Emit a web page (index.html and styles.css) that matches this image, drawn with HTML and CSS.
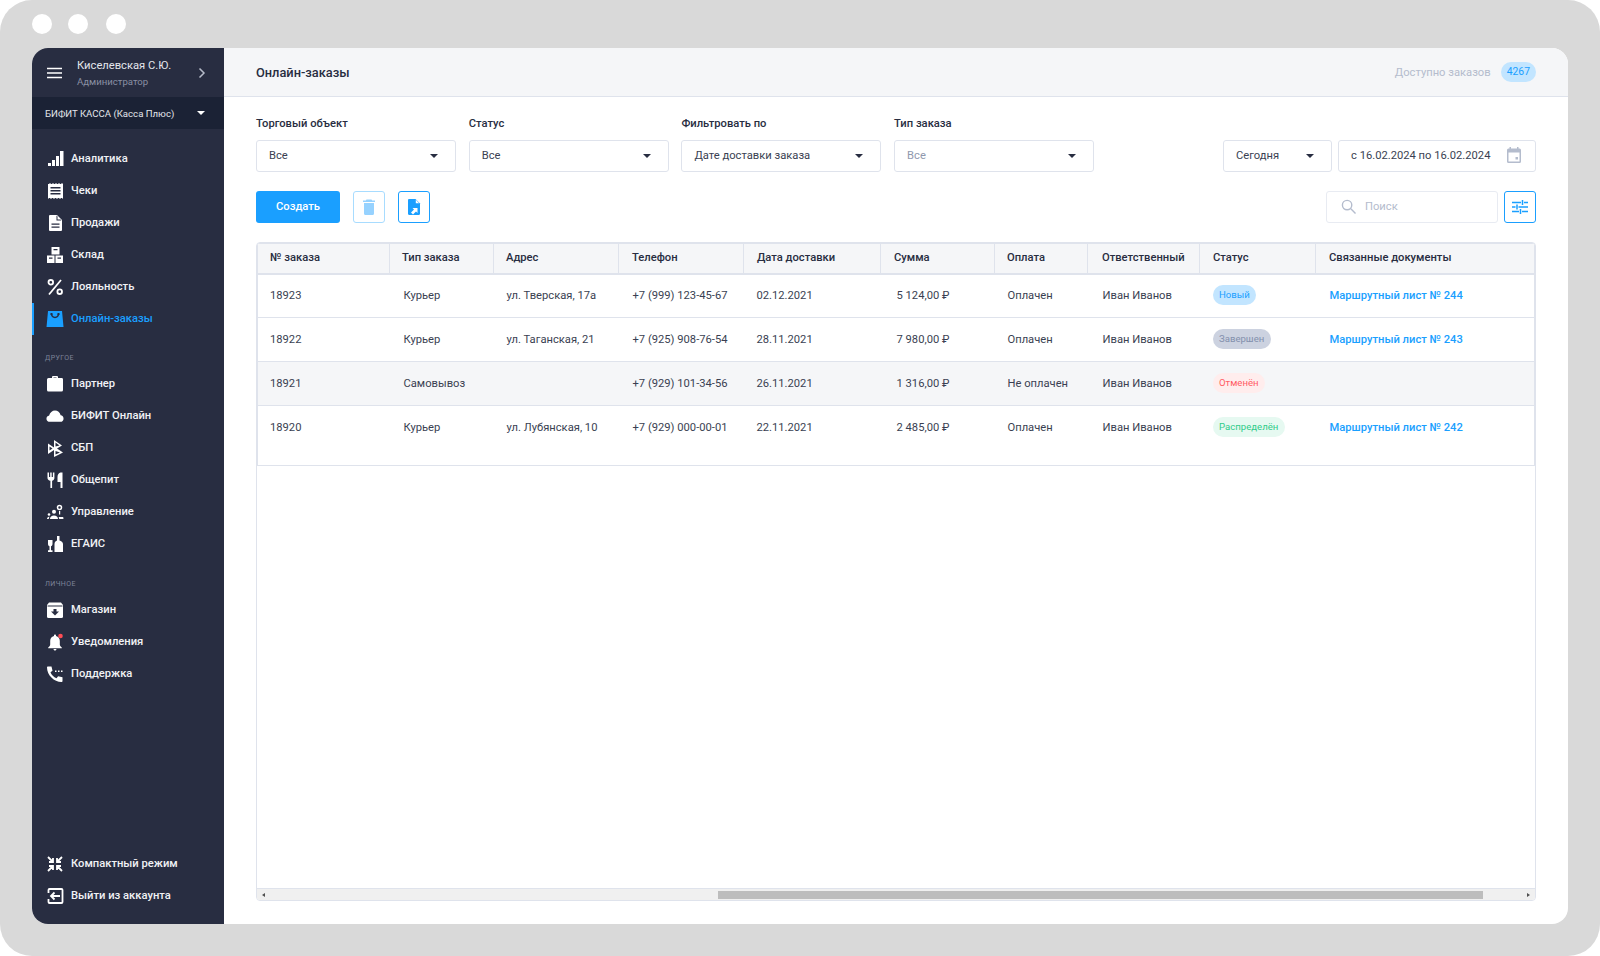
FILE: index.html
```html
<!DOCTYPE html>
<html lang="ru">
  <head>
    <meta charset="UTF-8" />
    <title>Онлайн-заказы</title>
    <link rel="stylesheet" href="styles.css">
  </head>
  <body>
    <div class="frame">
      <div class="dots"><span></span><span></span><span></span></div>

      <div class="app">
        <aside class="sidebar">
          <div class="user">
            <svg class="burger" viewBox="0 0 16 12"><path d="M0 1.5h15M0 6h15M0 10.500h15" /></svg>
            <div class="user-text">
              <div class="user-name">Киселевская С.Ю.</div>
              <div class="user-role">Администратор</div>
            </div>
            <svg class="chevron" viewBox="0 0 8 12"><path d="M1.500 1.500 6 6l-4.500 4.500" /></svg>
          </div>
          <div class="kassa">
            <span>БИФИТ КАССА (Касса Плюс)</span>
            <i class="caret caret-white"></i>
          </div>

          <nav class="nav">
            <a class="nav-item">
              <svg viewBox="0 0 18 18"><path d="M2 13h3v3H2zM6 10h3v6H6zM10 6h3v10h-3zM14 1h3.500v15H14z" /></svg>
              Аналитика
            </a>
            <a class="nav-item">
              <svg viewBox="0 0 18 18"><path d="M2 1.500h15v15H2z" /><path class="cut" d="M4.500 5h10v1.400h-10zM4.500 8h10v1.400h-10zM4.500 11h10v1.400h-10z" /><path class="cut" d="M2 1h1v1H2zM5 1h1v1H5zM8 1h1v1H8zM11 1h1v1h-1zM14 1h1v1h-1zM3 16h1v1H3zM6 16h1v1H6zM9 16h1v1H9zM12 16h1v1h-1zM15 16h1v1h-1z" /></svg>
              Чеки
            </a>
            <a class="nav-item">
              <svg viewBox="0 0 18 18"><path d="M4 1h7l5 5v10a1 1 0 0 1-1 1H4a1 1 0 0 1-1-1V2a1 1 0 0 1 1-1z" /><path class="cut" d="M10.500 1.500v5h5l-1-1h-3v-3zM5.500 9.500h8v1.300h-8zM5.500 12.500h8v1.300h-8z" /></svg>
              Продажи
            </a>
            <a class="nav-item">
              <svg viewBox="0 0 18 18"><path d="M5.500 1h8v7.500h-8zM1 9.500h7.500V17H1zM9.500 9.500H17V17H9.500z" /><path class="cut" d="M7.500 3h4v1.300h-4zM3 11.500h3.500v1.300H3zM11.500 11.500H15v1.300h-3.500z" /></svg>
              Склад
            </a>
            <a class="nav-item">
              <svg class="line bold" viewBox="0 0 18 18"><circle cx="4.800" cy="4.300" r="2.300" /><circle cx="13.700" cy="13.700" r="2.300" /><path d="M15 2 3 16.500" /></svg>
              Лояльность
            </a>
            <a class="nav-item active">
              <svg viewBox="0 0 18 18"><path d="M2 1h14l1.500 16H.5z" /><path class="smile" d="M5.500 4c.5 4.500 6.500 4.500 7 0" /><path class="smile-tip" d="M4.500 3h2v2h-2zM11.500 3h2v2h-2z" /></svg>
              Онлайн-заказы
            </a>

            <div class="nav-label">Другое</div>
            <a class="nav-item">
              <svg viewBox="0 0 18 18"><path d="M6 3V2a1 1 0 0 1 1-1h4a1 1 0 0 1 1 1v1h4a1.500 1.500 0 0 1 1 1.500V15a1.500 1.500 0 0 1-1.500 1.500h-13A1.500 1.500 0 0 1 1 15V4.500A1.500 1.500 0 0 1 2.500 3zm1.500-.500V3h3v-.500z" /></svg>
              Партнер
            </a>
            <a class="nav-item">
              <svg viewBox="0 0 20 18"><path d="M4.500 15.500C2 15.500.5 14 .5 12c0-1.800 1.300-3.200 3-3.500C4.300 5.300 7 3 10 3c3 0 5.500 2.200 6.300 5.300 1.900.2 3.200 1.800 3.200 3.700 0 2-1.500 3.500-3.500 3.500z" /></svg>
              БИФИТ Онлайн
            </a>
            <a class="nav-item">
              <svg viewBox="0 0 18 18"><path d="M2 4.500 8 8.500V1l8 5.500L11 9.500l6 4-9 4.500v-7l-6 4zM3.500 7.500v4L6.500 9.500zM9.500 3.500v4l4-1zM9.500 12v3.500l4.500-2z" fill-rule="evenodd" /></svg>
              СБП
            </a>
            <a class="nav-item">
              <svg viewBox="0 0 18 18"><path d="M1.500 1.500H3V6h1.200V1.500h1.500V6h1.200V1.500h1.500V7c0 1.500-1 2.500-2.300 2.800V17H4.400V9.800C2.600 9.500 1.500 8.500 1.500 7zM14.500 1.500h2V17h-2v-6h-3V6c0-2.500 1.300-4 3-4.500z" /></svg>
              Общепит
            </a>
            <a class="nav-item">
              <svg viewBox="0 0 18 18"><circle cx="8" cy="8.800" r="2" /><circle cx="3" cy="11.500" r="1.300" /><path d="M4 16c0-2.200 1.700-3.500 4-3.500s4 1.300 4 3.500zM1 16c0-1.300.8-2.300 2-2.300l.6.100c-.5.600-.8 1.300-.8 2.200zM13.200 16c0-.8-.2-1.400-.6-2h4.600l.3 2z" /><circle class="gear" cx="13.500" cy="4.500" r="2" /><path d="M13 8h1.200v3.500H13z" /></svg>
              Управление
            </a>
            <a class="nav-item">
              <svg viewBox="0 0 18 18"><path d="M2 5h4.500v4c0 1.200-.7 2-1.500 2.300v4h1.500V17H2v-1.700h1.500v-4C2.700 11 2 10.200 2 9zM11 1h2.500v4.500c1.600.6 3.500 1.600 3.500 3.500v8H8.500V9c0-1.900 1.200-2.900 2.500-3.500z" /></svg>
              ЕГАИС
            </a>

            <div class="nav-label nav-label-low">Личное</div>
            <a class="nav-item">
              <svg viewBox="0 0 18 18"><path d="M3 1.500h12L17 4v11.500a1.500 1.500 0 0 1-1.500 1.500h-13A1.500 1.500 0 0 1 1 15.500V4z" /><path class="cut" d="M1.500 4.500h15v1h-15zM7.500 8h3v2.500h2.500L9 14.500 5 10.500h2.500z" /></svg>
              Магазин
            </a>
            <a class="nav-item">
              <svg viewBox="0 0 18 18"><path d="M9 1.500c.6 0 1 .4 1 1V3c2.500.6 3.800 2.600 3.800 5v3.500c0 1.200.7 2 2 3v.8H2.200v-.8c1.300-1 2-1.800 2-3V8C4.200 5.600 5.500 3.600 8 3v-.500c0-.6.400-1 1-1zM7.500 16h3c0 .8-.7 1.500-1.500 1.500S7.500 16.800 7.500 16z" /><circle class="dot" cx="14.500" cy="3" r="2.300" /></svg>
              Уведомления
            </a>
            <a class="nav-item">
              <svg viewBox="0 0 18 18"><path d="M2 1.500h3.500l1 4.200-2 1.600c1 2.700 3.200 4.900 6 6l1.600-2 4.400 1v3.700c0 .6-.4 1-1 1C8 17 1 10 1 2.500c0-.6.400-1 1-1z" /><path d="M9 5.500h1.500V7H9zM12 5.500h1.500V7H12zM15 5.500h1.500V7H15z" /></svg>
              Поддержка
            </a>
          </nav>

          <div class="nav nav-bottom">
            <a class="nav-item">
              <svg class="line bold" viewBox="0 0 18 18"><path d="M2 2l5 5M7 3v4H3M16 2l-5 5M11 3v4h4M2 16l5-5M3 11h4v4M16 16l-5-5M15 11h-4v4" /></svg>
              Компактный режим
            </a>
            <a class="nav-item">
              <svg class="line bold" viewBox="0 0 18 18"><path d="M2.500 6V3a1 1 0 0 1 1-1h12a1 1 0 0 1 1 1v12a1 1 0 0 1-1 1h-12a1 1 0 0 1-1-1v-3" /><path d="M14 9H5M8.500 5.500 5 9l3.500 3.500" /></svg>
              Выйти из аккаунта
            </a>
          </div>
        </aside>

        <main class="main">
          <header class="topbar">
            <div class="page-title">Онлайн-заказы</div>
            <div class="available">
              <span>Доступно заказов</span>
              <span class="count">4267</span>
            </div>
          </header>

          <section class="content">
            <div class="filters">
              <div class="field">
                <label>Торговый объект</label>
                <div class="select">Все<i class="caret"></i></div>
              </div>
              <div class="field">
                <label>Статус</label>
                <div class="select">Все<i class="caret"></i></div>
              </div>
              <div class="field">
                <label>Фильтровать по</label>
                <div class="select">Дате доставки заказа<i class="caret"></i></div>
              </div>
              <div class="field">
                <label>Тип заказа</label>
                <div class="select select-muted">Все<i class="caret"></i></div>
              </div>
              <div class="period">
                <div class="select select-today">Сегодня<i class="caret"></i></div>
                <div class="select select-date">
                  с 16.02.2024 по 16.02.2024
                  <svg viewBox="0 0 16 16"><path d="M3.500 0h1.500v1.500h6V0h1.500v1.500h1A1.500 1.500 0 0 1 15 3v11.500a1.500 1.500 0 0 1-1.500 1.500h-11A1.500 1.500 0 0 1 1 14.500V3a1.500 1.500 0 0 1 1.500-1.500h1zM2.500 5.500v9h11v-9zM9.500 10h2.500v2.500H9.500z" fill-rule="evenodd" /></svg>
                </div>
              </div>
            </div>

            <div class="actions">
              <button class="btn-primary">Создать</button>
              <button class="btn-icon btn-disabled">
                <svg viewBox="0 0 18 18"><path d="M6.500 1.500h5l.7 1H15V4H3V2.500h2.800zM4 5h10v10.500A1.500 1.500 0 0 1 12.500 17h-7A1.500 1.500 0 0 1 4 15.500z" /></svg>
              </button>
              <button class="btn-icon">
                <svg viewBox="0 0 18 18"><path d="M4 1h6.500L15 5.500V15.500A1.500 1.500 0 0 1 13.500 17h-9A1.500 1.500 0 0 1 3 15.500V2a1 1 0 0 1 1-1z" /><path class="white" d="M10.800 1.800v3.400h3.400zM6 14.500l3-3-1.500-1.500h5v5L11 13.500l-3 3z" /></svg>
              </button>
              <div class="search">
                <svg viewBox="0 0 16 16"><circle cx="6.500" cy="6.500" r="5" /><path d="m10.500 10.500 5 5" /></svg>
                <span>Поиск</span>
              </div>
              <button class="btn-icon">
                <svg class="sliders" viewBox="0 0 16 14"><path d="M0 2.500h9M12 2.500h4M10.500 0v5M0 7h3.500M6.500 7H16M5 4.500v5M0 11.500h7M10 11.500h6M8.500 9v5" /></svg>
              </button>
            </div>

            <div class="table-box">
              <div class="table-area">
                <table>
                  <colgroup>
                    <col class="c1"><col class="c2"><col class="c3"><col class="c4"><col class="c5">
                    <col class="c6"><col class="c7"><col class="c8"><col class="c9"><col>
                  </colgroup>
                  <thead>
                    <tr>
                      <th>№ заказа</th>
                      <th>Тип заказа</th>
                      <th>Адрес</th>
                      <th>Телефон</th>
                      <th>Дата доставки</th>
                      <th>Сумма</th>
                      <th>Оплата</th>
                      <th>Ответственный</th>
                      <th>Статус</th>
                      <th>Связанные документы</th>
                    </tr>
                  </thead>
                  <tbody>
                    <tr>
                      <td>18923</td>
                      <td>Курьер</td>
                      <td>ул. Тверская, 17а</td>
                      <td>+7 (999) 123-45-67</td>
                      <td>02.12.2021</td>
                      <td>5 124,00 ₽</td>
                      <td>Оплачен</td>
                      <td>Иван Иванов</td>
                      <td><span class="pill pill-new">Новый</span></td>
                      <td class="doc">Маршрутный лист № 244</td>
                    </tr>
                    <tr>
                      <td>18922</td>
                      <td>Курьер</td>
                      <td>ул. Таганская, 21</td>
                      <td>+7 (925) 908-76-54</td>
                      <td>28.11.2021</td>
                      <td>7 980,00 ₽</td>
                      <td>Оплачен</td>
                      <td>Иван Иванов</td>
                      <td><span class="pill pill-done">Завершен</span></td>
                      <td class="doc">Маршрутный лист № 243</td>
                    </tr>
                    <tr class="row-grey">
                      <td>18921</td>
                      <td>Самовывоз</td>
                      <td></td>
                      <td>+7 (929) 101-34-56</td>
                      <td>26.11.2021</td>
                      <td>1 316,00 ₽</td>
                      <td>Не оплачен</td>
                      <td>Иван Иванов</td>
                      <td><span class="pill pill-cancel">Отменён</span></td>
                      <td></td>
                    </tr>
                    <tr class="row-last">
                      <td>18920</td>
                      <td>Курьер</td>
                      <td>ул. Лубянская, 10</td>
                      <td>+7 (929) 000-00-01</td>
                      <td>22.11.2021</td>
                      <td>2 485,00 ₽</td>
                      <td>Оплачен</td>
                      <td>Иван Иванов</td>
                      <td><span class="pill pill-sent">Распределён</span></td>
                      <td class="doc">Маршрутный лист № 242</td>
                    </tr>
                  </tbody>
                </table>
              </div>
              <div class="scrollbar">
                <i class="arrow arrow-left"></i>
                <div class="thumb"></div>
                <i class="arrow arrow-right"></i>
              </div>
            </div>
          </section>
        </main>
      </div>
    </div>
  </body>
</html>
```

FILE: styles.css
```css
:root {
  --dark: #282d41;
  --dark-2: #1b2235;
  --blue: #1a9fff;
  --line: #dfe3ec;
  --muted: #b4bccd;
  --head: #f5f6f8;
  --text: #3a3f52;
}

* {
  box-sizing: border-box;
}

body {
  margin: 0;
  background: #fff;
  font-family: Roboto, "Noto Sans", sans-serif;
  color: var(--text);
  font-size: 11.200px;
}

.frame {
  width: 1600px;
  height: 956px;
  padding: 14px 32px 32px;
  background: #d9d9d9;
  border-radius: 32px;
  display: flex;
  flex-direction: column;
}

.dots {
  display: flex;
  gap: 16px;
  height: 20px;
  margin-bottom: 14px;
}

.dots span {
  width: 20px;
  height: 20px;
  border-radius: 50%;
  background: #fff;
}

.dots span:last-child {
  margin-left: 2px;
}

.app {
  flex: 1;
  display: flex;
  min-height: 0;
  border-radius: 16px;
  overflow: hidden;
  background: #fff;
}

/* sidebar */

.sidebar {
  width: 192px;
  background: var(--dark);
  color: #fff;
  display: flex;
  flex-direction: column;
}

.user {
  height: 49px;
  display: flex;
  align-items: center;
  padding: 0 15px;
}

.burger {
  width: 16px;
  height: 12px;
  fill: none;
  stroke: #fff;
  stroke-width: 1.400;
  flex: none;
}

.user-text {
  flex: 1;
  margin-left: 14px;
}

.user-name {
  font-size: 11.200px;
  line-height: 16px;
  color: #e4e6ec;
}

.user-role {
  font-size: 9.600px;
  line-height: 13px;
  margin-top: 1px;
  color: #8a90a4;
}

.chevron {
  width: 8px;
  height: 12px;
  fill: none;
  stroke: #b6bbc9;
  stroke-width: 1.500;
  margin-right: 3px;
}

.kassa {
  height: 32px;
  background: var(--dark-2);
  padding: 0 19px 0 13px;
  display: flex;
  align-items: center;
  justify-content: space-between;
  font-size: 9.600px;
  color: #e4e6ec;
}

.caret {
  width: 0;
  height: 0;
  border-left: 4px solid transparent;
  border-right: 4px solid transparent;
  border-top: 4.500px solid var(--dark);
  flex: none;
}

.caret-white {
  border-top-color: #fff;
}

.nav {
  padding-top: 14px;
}

.nav-bottom {
  margin-top: auto;
  padding: 0 0 12px;
}

.nav-item {
  height: 32px;
  display: flex;
  align-items: center;
  gap: 7px;
  padding: 0 0 2px 14px;
  font-size: 11.200px;
  font-weight: 500;
  color: #f1f2f5;
}

.nav-item svg {
  width: 18px;
  height: 18px;
  margin-top: 2px;
  flex: none;
  fill: #fff;
}

.nav-item svg.line {
  fill: none;
  stroke: #fff;
  stroke-width: 1.500;
}

.nav-item svg.bold {
  stroke-width: 1.800;
}

.nav-item .cut {
  fill: var(--dark);
}

.nav-item .smile {
  fill: none;
  stroke: var(--dark);
  stroke-width: 1.500;
}

.nav-item .smile-tip {
  fill: var(--dark);
}

.nav-item .gear {
  fill: none;
  stroke: #fff;
  stroke-width: 1.500;
}

.nav-item .dot {
  fill: #ff4d55;
}

.nav-item.active {
  color: var(--blue);
  box-shadow: inset 2px 0 0 var(--blue);
}

.nav-item.active svg {
  fill: var(--blue);
}

.nav-label {
  height: 33px;
  padding: 18px 0 0 13px;
  font-size: 7px;
  line-height: 10px;
  letter-spacing: 0.400px;
  text-transform: uppercase;
  color: #7e8499;
}

.nav-label-low {
  height: 34px;
  padding-top: 19px;
}

/* main */

.main {
  flex: 1;
  min-width: 0;
  display: flex;
  flex-direction: column;
}

.topbar {
  height: 49px;
  background: var(--head);
  border-bottom: 1px solid var(--line);
  padding: 0 32px;
  display: flex;
  align-items: center;
  justify-content: space-between;
}

.page-title {
  font-size: 12.800px;
  font-weight: 500;
  color: var(--dark);
}

.available {
  display: flex;
  align-items: center;
  gap: 10px;
  color: var(--muted);
}

.count {
  height: 20px;
  line-height: 20px;
  padding: 0 6px;
  border-radius: 10px;
  background: #c2e5ff;
  color: var(--blue);
  font-size: 10.400px;
}

.content {
  flex: 1;
  min-height: 0;
  padding: 19px 32px 23px;
  display: flex;
  flex-direction: column;
}

.filters {
  display: flex;
  align-items: flex-end;
  gap: 12.700px;
}

.field {
  width: 200px;
}

.field label {
  display: block;
  height: 16px;
  line-height: 16px;
  margin-bottom: 8px;
  font-weight: 500;
  color: var(--dark);
}

.select {
  height: 32px;
  padding: 0 12px 2px;
  border: 1px solid var(--line);
  border-radius: 3px;
  background: #fff;
  display: flex;
  align-items: center;
  justify-content: space-between;
}

.select .caret {
  margin: 2px 5px 0 0;
}

.select-muted {
  color: #8f98ae;
}

.period {
  margin-left: auto;
  display: flex;
  gap: 6px;
}

.select-today {
  width: 109px;
}

.select-date {
  width: 198px;
  padding-right: 13px;
}

.select-date svg {
  width: 16px;
  height: 16px;
  fill: var(--muted);
}

.actions {
  margin-top: 19px;
  display: flex;
  align-items: center;
  gap: 13px;
}

.btn-primary {
  width: 84px;
  height: 32px;
  padding: 0 0 1px;
  border: 0;
  border-radius: 3px;
  background: var(--blue);
  color: #fff;
  font: 500 11.200px Roboto, sans-serif;
}

.btn-icon {
  width: 32px;
  height: 32px;
  padding: 0;
  border: 1px solid var(--blue);
  border-radius: 3px;
  background: #fff;
  display: flex;
  align-items: center;
  justify-content: center;
}

.btn-icon svg {
  width: 18px;
  height: 18px;
  fill: var(--blue);
}

.btn-icon .white {
  fill: #fff;
}

.btn-disabled {
  border-color: #a8dcff;
}

.btn-disabled svg {
  fill: #96d2ff;
}

.btn-icon svg.sliders {
  width: 16px;
  height: 14px;
  fill: none;
  stroke: var(--blue);
  stroke-width: 1.500;
}

.search {
  width: 172px;
  height: 32px;
  margin-left: auto;
  margin-right: -7px;
  padding: 0 0 2px 14px;
  border: 1px solid #e8ebf2;
  border-radius: 3px;
  display: flex;
  align-items: center;
  gap: 9px;
  color: var(--muted);
}

.search svg {
  width: 15px;
  height: 15px;
  fill: none;
  stroke: var(--muted);
  stroke-width: 1.500;
}

/* table */

.table-box {
  flex: 1;
  min-height: 0;
  margin-top: 19px;
  border: 1px solid var(--line);
  border-radius: 4px;
  display: flex;
  flex-direction: column;
  overflow: hidden;
}

.table-area {
  flex: 1;
  min-height: 0;
}

table {
  width: 100%;
  table-layout: fixed;
  border-collapse: collapse;
}

.c1 { width: 132px; }
.c2 { width: 104px; }
.c3 { width: 125px; }
.c4 { width: 125px; }
.c5 { width: 137px; }
.c6 { width: 114px; }
.c7 { width: 93px; }
.c8 { width: 112px; }
.c9 { width: 116px; }

th {
  height: 30px;
  padding: 0 0 1px 12px;
  background: var(--head);
  border-top: 1px solid var(--line);
  border-bottom: 2px solid var(--line);
  border-right: 1px solid var(--line);
  text-align: left;
  font-size: 11.200px;
  font-weight: 500;
  color: var(--dark);
}

th:first-child,
td:first-child {
  border-left: 1px solid var(--line);
}

th:last-child,
td:last-child {
  border-right: 1px solid var(--line);
}

th:nth-child(n+4) {
  padding-left: 13px;
}

th:nth-child(7) {
  padding-left: 12px;
}

th:nth-child(8) {
  padding-left: 14px;
}

td {
  height: 44px;
  padding: 0 0 1px 13px;
  border-bottom: 1px solid var(--line);
  white-space: nowrap;
  overflow: hidden;
}

td:nth-child(1) {
  padding-left: 12px;
}

td:nth-child(2),
td:nth-child(4),
td:nth-child(10) {
  padding-left: 14px;
}

td:nth-child(6) {
  padding-left: 16px;
}

td:nth-child(8) {
  padding-left: 15px;
}

.row-grey td {
  background: var(--head);
}

.row-last td {
  height: 60px;
  padding-bottom: 17px;
}

.doc {
  color: var(--blue);
  font-weight: 500;
}

.pill {
  display: inline-block;
  height: 20px;
  line-height: 20px;
  padding: 0 6.500px;
  border-radius: 10px;
  font-size: 9.600px;
  vertical-align: middle;
}

.pill-new { background: #c2e5ff; color: var(--blue); }
.pill-done { background: #ccd2e0; color: #8390ad; }
.pill-cancel { background: #ffeded; color: #ff5c64; }
.pill-sent { background: #e6f9f1; color: #2ecc8a; }

.scrollbar {
  height: 12px;
  flex: none;
  background: #f0f0f0;
  border-top: 1px solid var(--line);
  display: flex;
  align-items: center;
  padding-left: 5px;
}

.thumb {
  height: 8px;
  width: 765px;
  margin-left: 453px;
  background: #bdbdbd;
}

.arrow {
  width: 0;
  height: 0;
  border-top: 2.500px solid transparent;
  border-bottom: 2.500px solid transparent;
}

.arrow-left {
  border-right: 3px solid #505050;
}

.arrow-right {
  border-left: 3px solid #505050;
  margin-left: 44px;
}
```
